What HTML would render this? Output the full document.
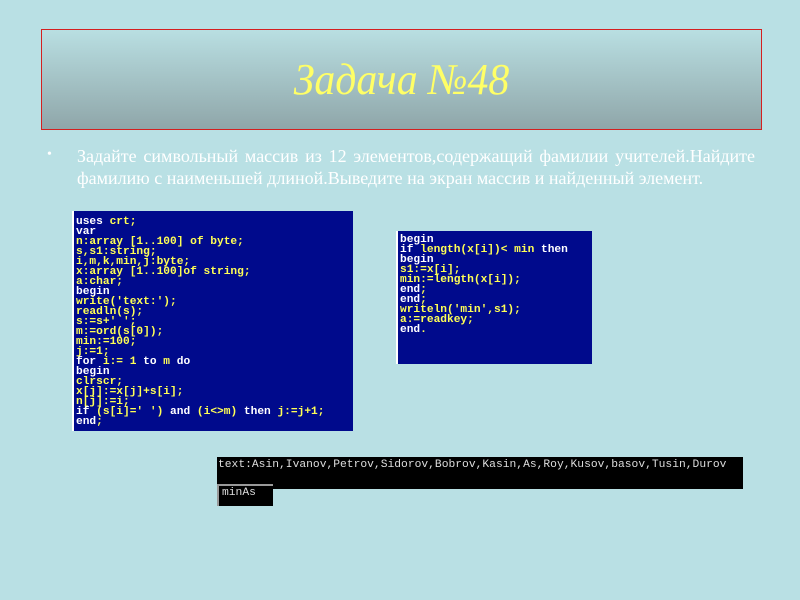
<!DOCTYPE html>
<html><head><meta charset="utf-8"><style>
body{margin:0;width:800px;height:600px;background:#b9e0e4;position:relative;overflow:hidden;font-family:"Liberation Serif",serif}
.t{position:absolute;left:41px;top:29px;width:719px;height:99px;border:1px solid #d42020;background:linear-gradient(#b9dfe2,#8fa6a9);}
.t div{text-align:center;font-style:italic;color:#ffff66;font-size:44px;line-height:99px;font-family:"Liberation Serif",serif;transform:scaleX(0.95)}
.p{position:absolute;left:77px;width:678px;color:#fff;font-size:18px;line-height:22px;white-space:nowrap}
.j{text-align:justify;text-align-last:justify}
.b{position:absolute;left:47px;top:147px;color:#fff;font-size:14px}
.code{position:absolute;background:#000a8c;font-family:"Liberation Mono",monospace;font-weight:bold;font-size:11.2px;line-height:10px;color:#ffff55;white-space:pre;border-left:2px solid #fff;padding-left:2px;box-sizing:border-box;overflow:hidden}
.w{color:#fff}
.con{position:absolute;background:#000;color:#ddd;font-family:"Liberation Mono",monospace;font-size:11.3px;white-space:pre;overflow:hidden}
</style></head><body>
<div class="t"><div>Задача №48</div></div>
<div class="b">•</div>
<div class="p j" style="top:145px;white-space:normal">Задайте символьный массив из 12 элементов,содержащий фамилии учителей.Найдите</div>
<div class="p" style="top:167px">фамилию с наименьшей длиной.Выведите на экран массив и найденный элемент.</div>
<div class="code" style="left:72px;top:211px;width:281px;height:220px;padding-top:6px"><span class="w">uses</span> crt;
<span class="w">var</span>
n:array [1..100] of byte;
s,s1:string;
i,m,k,min,j:byte;
x:array [1..100]of string;
a:char;
<span class="w">begin</span>
write('text:');
readln(s);
s:=s+' ';
m:=ord(s[0]);
min:=100;
j:=1;
<span class="w">for</span> i:= 1 <span class="w">to</span> m <span class="w">do</span>
<span class="w">begin</span>
clrscr;
x[j]:=x[j]+s[i];
n[j]:=i;
<span class="w">if</span> (s[i]=' ') <span class="w">and</span> (i&lt;&gt;m) <span class="w">then</span> j:=j+1;
<span class="w">end</span>;</div>
<div class="code" style="left:396px;top:231px;width:196px;height:133px;padding-top:4px"><span class="w">begin</span>
<span class="w">if</span> length(x[i])&lt; min <span class="w">then</span>
<span class="w">begin</span>
s1:=x[i];
min:=length(x[i]);
<span class="w">end</span>;
<span class="w">end</span>;
writeln('min',s1);
a:=readkey;
<span class="w">end</span>.</div>
<div class="con" style="left:217px;top:457px;width:526px;height:32px;padding:2px 1px;box-sizing:border-box">text:Asin,Ivanov,Petrov,Sidorov,Bobrov,Kasin,As,Roy,Kusov,basov,Tusin,Durov</div>
<div class="con" style="left:217px;top:484px;width:56px;height:22px;border-top:2px solid #999;border-left:2px solid #999;padding:1px 3px;box-sizing:border-box">minAs</div>
</body></html>
